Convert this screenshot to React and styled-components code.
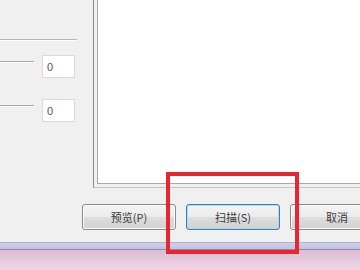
import React from "react";
import styled, { createGlobalStyle } from "styled-components";

const GlobalStyle = createGlobalStyle`
  html, body {
    margin: 0;
    padding: 0;
    background: #f0d4e4;
  }
  body {
    font-family: "Noto Sans CJK SC", "Liberation Sans", sans-serif;
  }
`

const Screen = styled.div`
  position: relative;
  width: 360px;
  height: 270px;
  overflow: hidden;
  display: flex;
  flex-direction: column;
`

const Dialog = styled.div`
  height: 242px;
  background: #f0f0f0;
  display: flex;
  flex-direction: column;
  border-bottom: 1px solid #b2b2be;
`

const TopArea = styled.div`
  display: flex;
  height: 188px;
`

const LeftPanel = styled.div`
  width: 93px;
  flex-shrink: 0;
  display: flex;
  flex-direction: column;
`

const GroupLine = styled.div`
  margin-top: 39px;
  width: 77px;
  height: 1px;
  background: #b4b4b4;
  border-bottom: 1px solid #ffffff;
`

const SliderRow = styled.div`
  display: flex;
  align-items: flex-start;
  margin-top: ${props => props.top}px;
  height: 24px;
`

const Track = styled.div`
  margin-top: 6px;
  width: 34px;
  height: 1px;
  background: #a8a8a8;
  border-bottom: 1px solid #ffffff;
`

const ValueBox = styled.div`
  margin-left: 8px;
  width: 33px;
  height: 23px;
  box-sizing: border-box;
  background: #ffffff;
  border: 1px solid #dadada;
  font-family: "Liberation Sans", sans-serif;
  font-size: 11px;
  color: #555;
  padding: 5px 0 0 4px;
`

const Frame = styled.div`
  flex: 1;
  display: flex;
  border-left: 1px solid #8c8c8c;
  border-bottom: 1px solid #c4c4c4;
  padding: 0 0 3px 3px;
`

const Preview = styled.div`
  flex: 1;
  background: #ffffff;
  border-left: 1px solid #a8a8a8;
  border-bottom: 1px solid #a8a8a8;
`

const ButtonRow = styled.div`
  display: flex;
  gap: 10px;
  padding-left: 82px;
  margin-top: 16px;
`

const Button = styled.div`
  flex-shrink: 0;
  width: 94px;
  height: 26px;
  box-sizing: border-box;
  border: 1px solid ${props => props.primary ? "#3c7fb1" : "#8a8a8a"};
  border-radius: 3px;
  background: linear-gradient(#f4f4f4 0%, #ececec 48%, #dddddd 52%, #d2d2d2 100%);
  box-shadow: inset 0 0 0 1px ${props => props.primary ? "#a8dcf4" : "#fbfbfb"};
  display: flex;
  align-items: center;
  justify-content: center;
  font-size: 11px;
  color: #3a3a3a;
`

const BottomStrip = styled.div`
  height: 6px;
  background: linear-gradient(#cdcdef, #c2c2e6);
  border-bottom: 1px solid #8e8a9c;
`

const Backdrop = styled.div`
  flex: 1;
  background: linear-gradient(#dcbcd2, #f2d6e8);
`

const Highlight = styled.div`
  position: absolute;
  left: 166px;
  top: 172px;
  width: 133px;
  height: 82px;
  box-sizing: border-box;
  border: 4px solid #e8262e;
`

export default function App() {
  return (
    <Screen>
      <GlobalStyle />
      <Dialog>
        <TopArea>
          <LeftPanel>
            <GroupLine />
            <SliderRow top={14}>
              <Track />
              <ValueBox>0</ValueBox>
            </SliderRow>
            <SliderRow top={20}>
              <Track />
              <ValueBox>0</ValueBox>
            </SliderRow>
          </LeftPanel>
          <Frame>
            <Preview />
          </Frame>
        </TopArea>
        <ButtonRow>
          <Button>预览(P)</Button>
          <Button primary>扫描(S)</Button>
          <Button>取消</Button>
        </ButtonRow>
      </Dialog>
      <BottomStrip />
      <Backdrop />
      <Highlight />
    </Screen>
  )
}
